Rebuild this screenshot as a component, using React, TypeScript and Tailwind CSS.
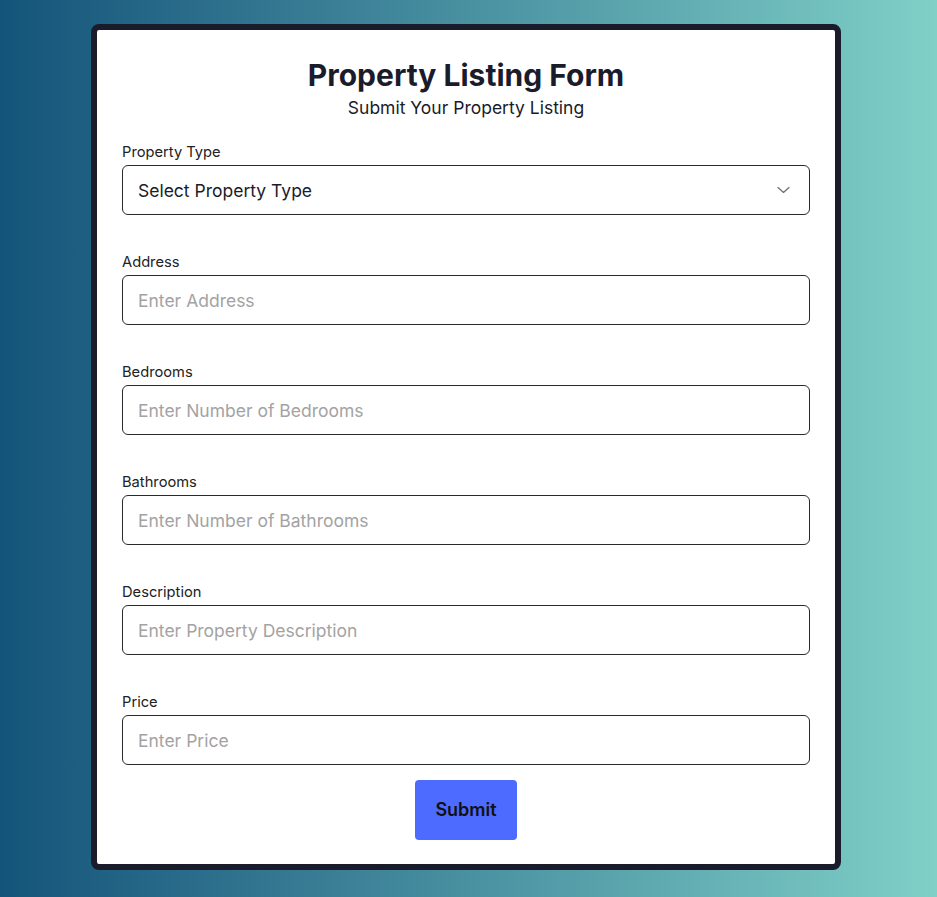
import React from 'react';

const fields = [
  { label: 'Address', placeholder: 'Enter Address' },
  { label: 'Bedrooms', placeholder: 'Enter Number of Bedrooms' },
  { label: 'Bathrooms', placeholder: 'Enter Number of Bathrooms' },
  { label: 'Description', placeholder: 'Enter Property Description' },
  { label: 'Price', placeholder: 'Enter Price' },
];

export default function App() {
  return (
    <div
      className="min-h-screen w-full bg-gradient-to-r from-[#13547a] to-[#80d0c7] pt-6 pb-[27px]"
      style={{ fontFamily: 'Inter, "Noto Sans", sans-serif' }}
    >
      <div className="ml-[91px] w-[750px] bg-white border-[6px] border-[#1a1b2b] rounded-lg px-[25px] pt-[27px] pb-6">
        <div className="text-center mb-[21px]">
          <h1 className="text-3xl font-bold text-[#1a1b2b]">Property Listing Form</h1>
          <p className="text-[17.5px] text-[#1a1b2b] leading-7 translate-y-[1px]">Submit Your Property Listing</p>
        </div>

        <div className="flex flex-col gap-[37px]">
          <div>
            <label className="block text-[14.7px] leading-5 text-[#222] mb-[3px]">Property Type</label>
            <div className="relative h-[50px] w-full border border-[#2a2a2a] rounded-md flex items-center px-[15px]">
              <span className="text-[17.5px] text-[#1a1b2b] translate-y-[1px]">Select Property Type</span>
              <svg
                className="absolute right-[19px] top-1/2 -translate-y-1/2"
                width="13"
                height="7"
                viewBox="0 0 13 7"
                fill="none"
                stroke="#6b7280"
                strokeWidth="1.3"
                strokeLinecap="round"
                strokeLinejoin="round"
              >
                <path d="M1 1 6.5 6 12 1" />
              </svg>
            </div>
          </div>

          {fields.map((f) => (
            <div key={f.label}>
              <label className="block text-[14.7px] leading-5 text-[#222] mb-[3px]">{f.label}</label>
              <input
                type="text"
                placeholder={f.placeholder}
                className="h-[50px] w-full border border-[#2a2a2a] rounded-md px-[15px] text-[17.5px] text-[#1a1b2b] placeholder:text-[#a3a3a3] outline-none"
              />
            </div>
          ))}
        </div>

        <div className="flex justify-center mt-[15px]">
          <button className="w-[102px] bg-[#4d6bfe] text-[#111] font-semibold text-lg py-4 rounded-sm leading-7">
            Submit
          </button>
        </div>
      </div>
    </div>
  );
}
